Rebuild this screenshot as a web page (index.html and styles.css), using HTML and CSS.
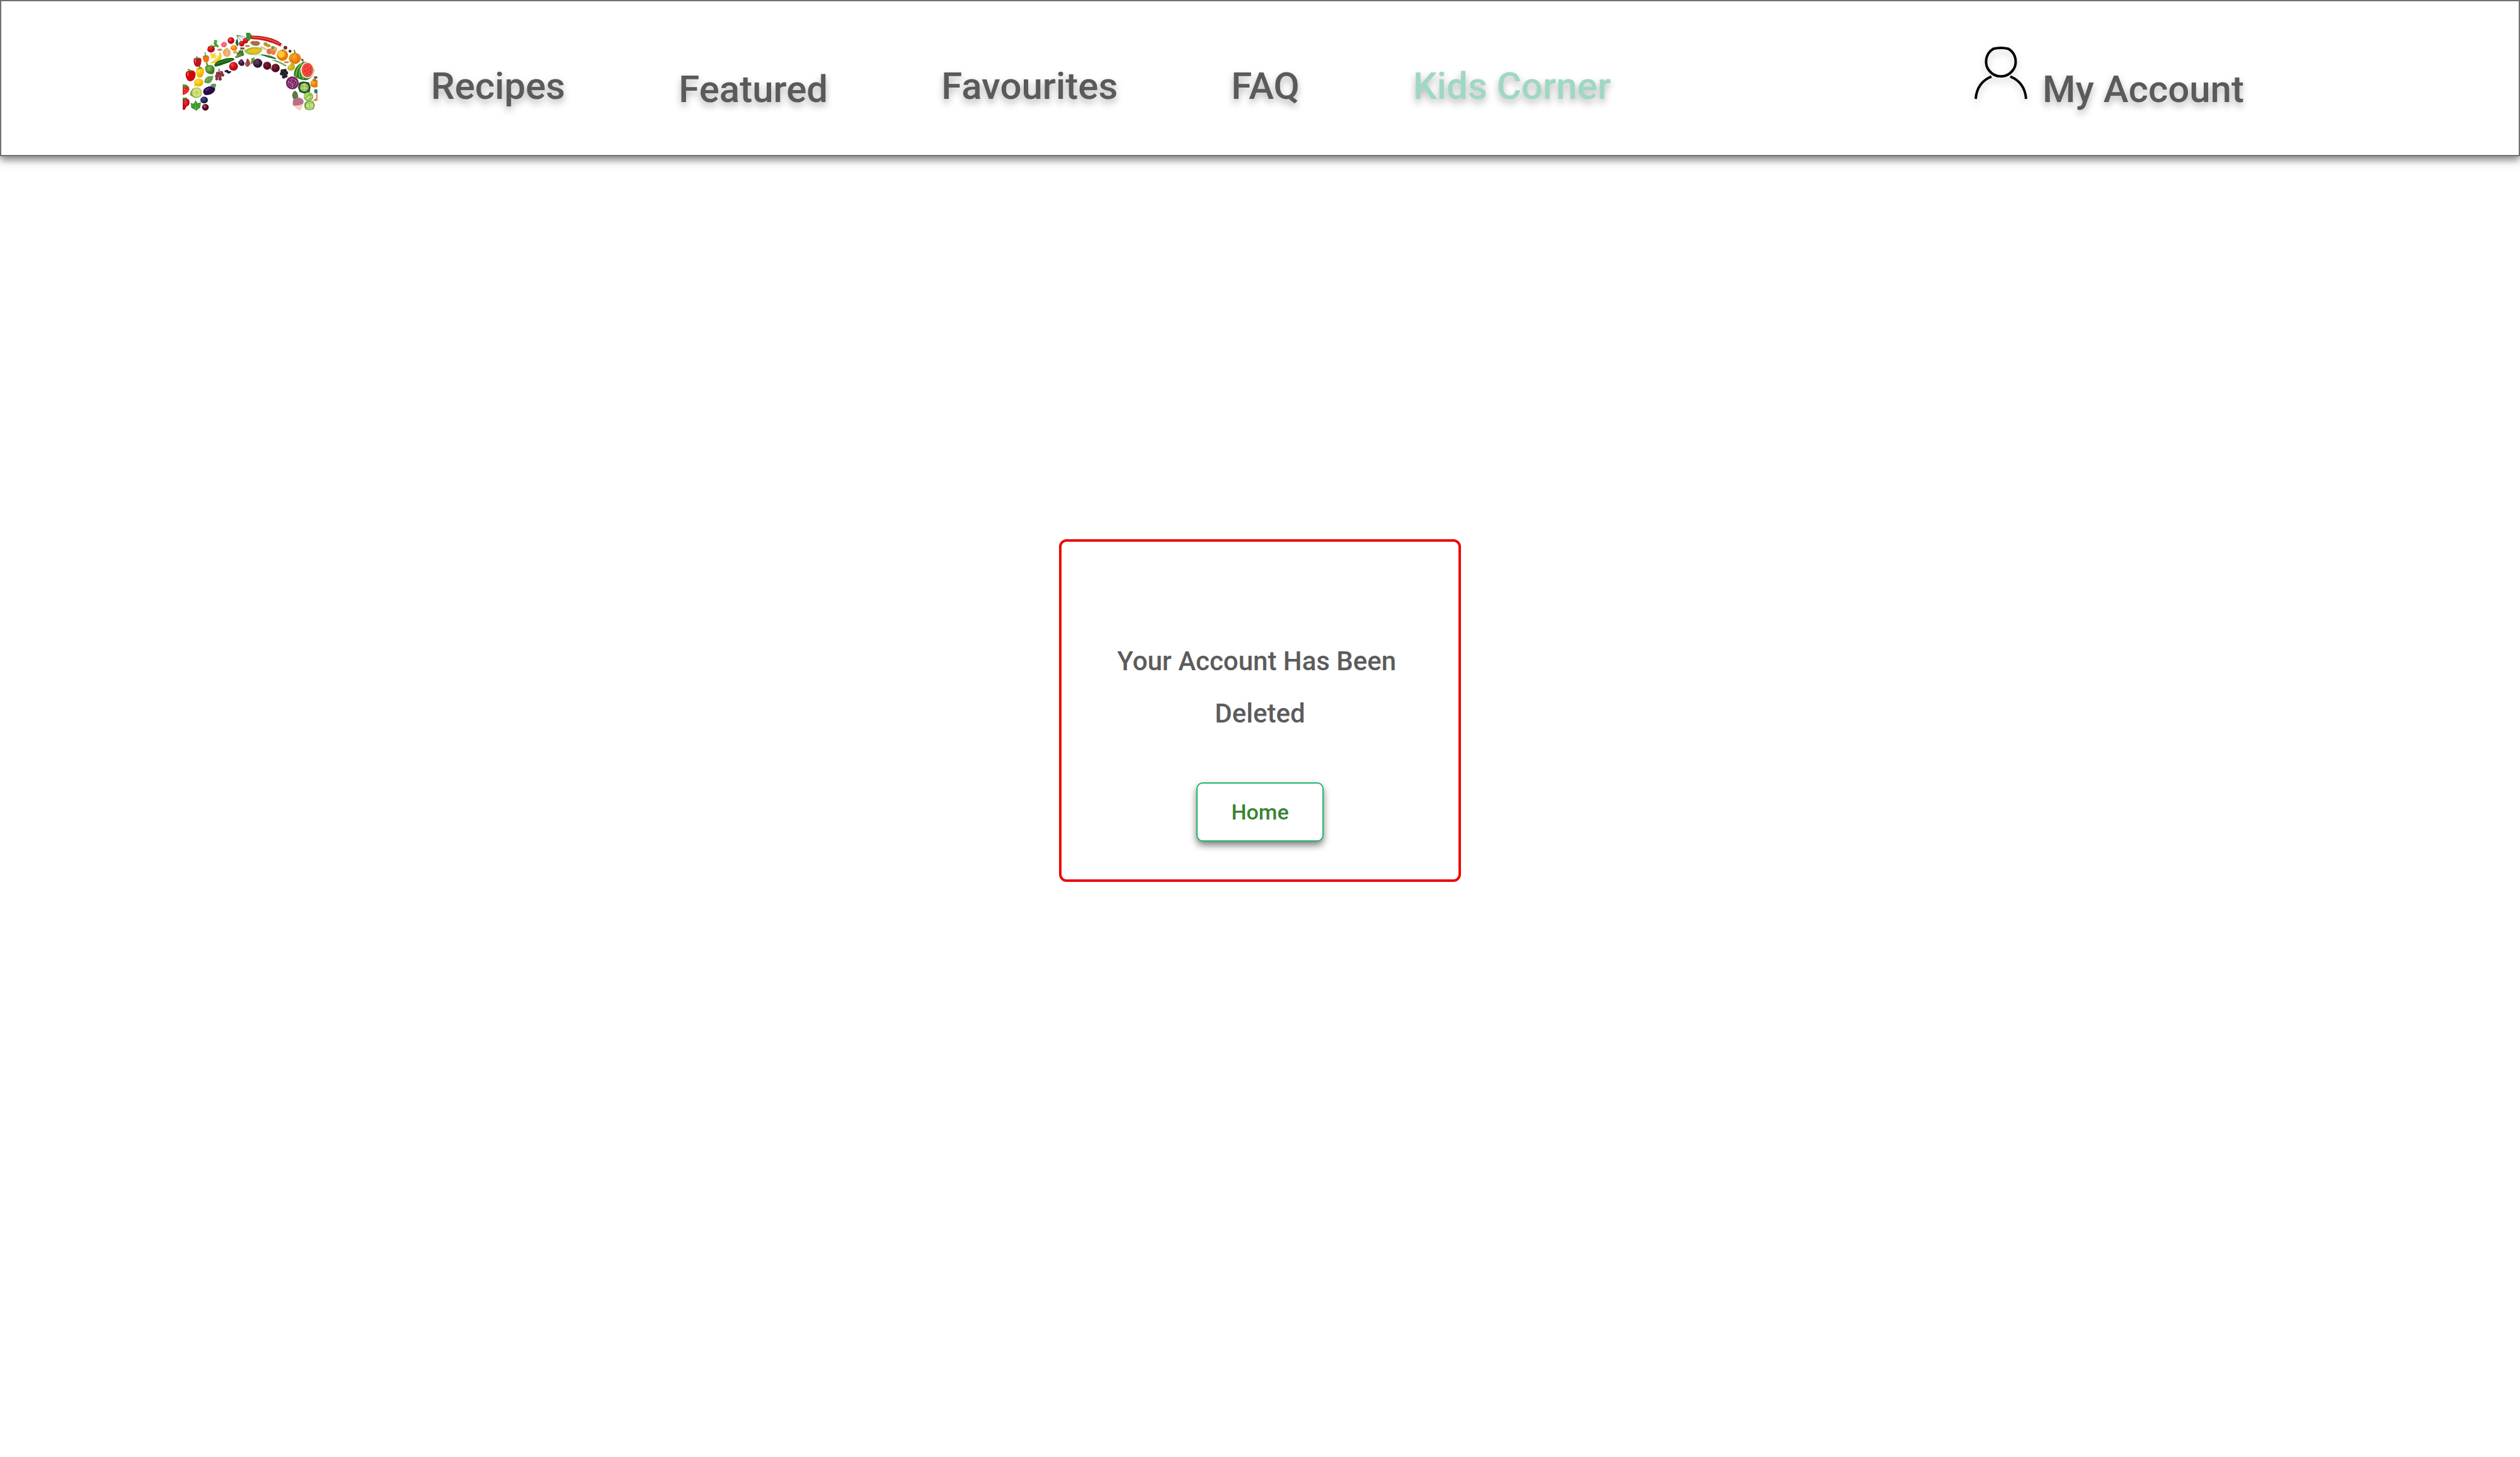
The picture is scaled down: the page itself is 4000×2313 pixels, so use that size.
FILE: index.html
```html
<!DOCTYPE html>
<html lang="en">
<head>
<meta charset="utf-8">
<meta name="viewport" content="width=device-width, initial-scale=1">
<title>Account deleted</title>
<link rel="stylesheet" href="styles.css">
</head>
<body>
<header class="site-header">
  <a class="logo" href="#" aria-label="Home page">
    <svg class="logo-art" viewBox="63 66 642 372" aria-hidden="true">
      <defs>
        <radialGradient id="red" cx=".4" cy=".35"><stop offset="0" stop-color="#f0303a"/><stop offset="1" stop-color="#b80510"/></radialGradient>
        <radialGradient id="orange" cx=".4" cy=".35"><stop offset="0" stop-color="#ffb52e"/><stop offset="1" stop-color="#e87a08"/></radialGradient>
        <radialGradient id="yellow" cx=".4" cy=".35"><stop offset="0" stop-color="#ffe94a"/><stop offset="1" stop-color="#f0b400"/></radialGradient>
        <radialGradient id="plum" cx=".4" cy=".35"><stop offset="0" stop-color="#6d4468"/><stop offset="1" stop-color="#2c1430"/></radialGradient>
        <radialGradient id="beet" cx=".4" cy=".35"><stop offset="0" stop-color="#8c1f36"/><stop offset="1" stop-color="#4c0a1c"/></radialGradient>
        <radialGradient id="leaf" cx=".4" cy=".35"><stop offset="0" stop-color="#8cc04a"/><stop offset="1" stop-color="#3d7d22"/></radialGradient>
        <radialGradient id="blue" cx=".4" cy=".35"><stop offset="0" stop-color="#4a5088"/><stop offset="1" stop-color="#1a1c48"/></radialGradient>
      </defs>
      <!-- left foot -->
      <path fill="#e3221c" d="M63 314q12-4 22 4 14 10 8 24-12 18-30 20z"/>
      <path fill="#3c9a2c" d="M63 312l18 2 12 10-14-2-4 8-12-10z"/>
      <path fill="#ffd0a0" d="M70 334h3v4h-3zM82 338h3v4h-3zM72 348h3v4h-3z"/>
      <path fill="url(#red)" d="M63 378q22-6 32 12 4 22-14 28l-8 15H63z"/>
      <path fill="#2f8a2a" d="M63 376l22 0-10 8 2 8-14-10z"/>
      <path fill="#8aa03a" d="M97 362q2-16 12-28 20-14 38-2 14 20 2 36-14 12-30 8z"/>
      <circle cx="130" cy="351" r="23" fill="#c4d860"/><circle cx="130" cy="351" r="18" fill="#dfe88a"/>
      <path stroke="#a5bb3c" stroke-width="2" d="M130 333v36M112 351h36M117 338l26 26M143 338l-26 26"/>
      <path fill="#38942e" d="M101 400l14 4 9-17 10 15 16-5-4 26-12 8-6 7-12-8-12-6z"/>
      <path stroke="#8bcc60" stroke-width="2" fill="none" d="M125 392v42M106 406l18 22M145 404l-19 26"/>
      <ellipse cx="165" cy="386" rx="18" ry="16" fill="url(#blue)"/>
      <circle cx="171" cy="421" r="16" fill="url(#beet)"/><circle cx="167" cy="417" r="5" fill="#b86070"/>
      <path fill="#2a0b45" d="M206 322q20 6 6 26-18 18-42 14-14-8-8-24 16-20 44-16z"/>
      <path fill="#5b2b86" d="M170 338q14-12 30-10-14 4-26 18z"/>
      <path fill="#5a9a52" d="M196 314l12-6 14 2-2 16-10 0-14-4z"/>
      <!-- left side -->
      <path fill="#d10808" d="M78 256q8-12 20-8 16-8 26 10 2 26-14 36-12 6-22 0-14-14-10-38z"/>
      <path fill="#ef5a50" d="M84 256q4-4 8-2l-4 24q-6-8-4-22z"/>
      <path stroke="#3b8a2b" stroke-width="6" fill="none" d="M88 240l8 4 8 4"/>
      <ellipse cx="139" cy="303" rx="22" ry="19" fill="url(#yellow)"/><path fill="#f0c420" d="M120 312l-4 8 10 0z"/>
      <path fill="url(#yellow)" d="M128 236q10-8 18-2 12-4 18 6 2 24-8 36-10 6-20 2-12-16-8-42z"/>
      <path stroke="#e0a000" stroke-width="2" d="M146 238v40"/>
      <path stroke="#3f9a30" stroke-width="5" fill="none" d="M146 234l-4-12M136 236l18-4"/>
      <path fill="#5c9a4a" d="M165 302q4-22 20-28 14-2 24-4-2 24-14 34-14 6-30-2z"/>
      <path stroke="#a9cf8c" stroke-width="2" fill="none" d="M168 302l38-30M182 290l-4-10M192 294l8-2"/>
      <path fill="url(#leaf)" d="M170 228q10-12 22-8 16-2 22 14 4 22-10 30-20 0-30-12-6-12-4-24z"/>
      <path stroke="#3d8a2c" stroke-width="6" fill="none" d="M176 208l6 16"/>
      <path fill="#c01320" d="M116 190q10-8 18-4 10-4 18 6 0 26-8 34-10 4-20 0-12-14-8-36z"/>
      <path fill="#ec6060" d="M121 192l6 0-2 20q-6-8-4-20z"/>
      <path stroke="#388a2a" stroke-width="4" fill="none" d="M122 188h22M134 186l-6-8"/>
      <path fill="#ef7410" d="M159 178q8-6 14-2 10-4 16 4 0 18-6 26-10 2-18-2-8-12-6-26z"/>
      <path stroke="#389a2c" stroke-width="4" fill="none" d="M164 176h18M173 174l-5-15"/>
      <path fill="url(#red)" d="M184 132q14-10 28-2 6 12 2 22-10 10-20 8-14-6-14-14z"/>
      <path fill="#4da832" d="M186 132l14-8 12 6-12 3zM210 102l14-2 4 8-4 8 12 14-4 6-14-4-8 2 4-12-6-6 6-6z"/>
      <path stroke="#9a2a30" stroke-width="5" fill="none" d="M236 238l0 12"/>
      <g fill="#85303a"><circle cx="230" cy="260" r="9"/><circle cx="246" cy="258" r="10"/><circle cx="254" cy="268" r="7"/><circle cx="225" cy="273" r="8"/><circle cx="239" cy="272" r="9"/><circle cx="225" cy="286" r="7"/><circle cx="241" cy="286" r="8"/></g>
      <g fill="#c27878"><circle cx="228" cy="258" r="2"/><circle cx="244" cy="256" r="3"/><circle cx="237" cy="270" r="3"/><circle cx="223" cy="272" r="2"/></g>
      <path fill="#281536" d="M262 246l14-4 8 8 10-2-2 8-12 6-8-8-8 0z"/>
      <!-- arch, left half -->
      <path fill="#f5d83c" d="M197 162l10 6 10-8 2 12 10 4-10 6 0 10-10-6-12 4 2-12-6-6z"/>
      <path fill="#f4c20e" d="M238 158l6 4q12 26-10 40-20 14-41 8 26-12 38-30 8-10 7-22z"/>
      <path fill="#ffe658" d="M240 164q6 20-12 32-10 8-24 11 22-11 32-27z"/>
      <path fill="#17621c" d="M214 218q6-14 30-22 30-12 54-10 14 2 10 10-24 14-50 20-24 10-38 11-8-2-6-9z"/>
      <path stroke="#4c9c36" stroke-width="3" fill="none" d="M224 214q36-18 74-20"/>
      <path fill="#f3b674" d="M253 156q8-12 20-18 16 8 20 20-2 20-18 24-20-4-22-26z"/>
      <path stroke="#d98c48" stroke-width="2" fill="none" d="M272 138q-14 22-4 42M274 138q16 20 4 42M264 144q-10 14-4 32"/>
      <ellipse cx="240" cy="147" rx="12" ry="5" fill="#b58a60"/>
      <path fill="#f27078" d="M244 122l8-10 8-4 12 6 2 12-10 10-14-2z"/>
      <circle cx="293" cy="103" r="16" fill="url(#red)"/><circle cx="289" cy="100" r="6" fill="#e05068"/>
      <ellipse cx="307" cy="138" rx="16" ry="13" fill="url(#orange)"/><ellipse cx="313" cy="158" rx="10" ry="8" fill="#edaa68"/>
      <path fill="#206a48" d="M316 104q4-10 8-6 8 16 2 32-14-6-10-26z"/>
      <path stroke="#235c38" stroke-width="2" fill="none" d="M318 78q24 4 42 28M322 78l22 32M322 78l2 22M322 78q34 2 44 18"/>
      <circle cx="344" cy="118" r="13" fill="url(#red)"/><circle cx="362" cy="104" r="13" fill="url(#red)"/>
      <g fill="#47782e"><circle cx="338" cy="158" r="9"/><circle cx="346" cy="168" r="9"/><circle cx="328" cy="166" r="7"/><circle cx="346" cy="155" r="6"/><path d="M310 182l20-16 14 12-24 8z"/></g>
      <path stroke="#98bb60" stroke-width="3" d="M314 182l20-10"/>
      <circle cx="305" cy="226" r="21" fill="url(#red)"/><path fill="#e45a66" d="M292 218q4-8 12-8-6 6-6 16z"/>
      <path fill="url(#plum)" d="M328 204l12-12 8 2 10 16-4 12-14 2-12-10z"/>
      <path fill="#a43f48" d="M368 190l6 0q12 16 10 26-6 12-14 12-10-4-10-14 8-12 8-24z"/><path fill="#de9188" d="M366 208l4 12-4-2z"/>
      <!-- crown -->
      <path fill="#3e8f32" d="M364 66h18l10 12-4 14-8 14-16-8 2-16z"/>
      <path fill="#c91c1a" d="M386 80q54-2 104 14 28 10 48 26l-8 12q-66-34-142-36z"/>
      <path stroke="#ef6a60" stroke-width="4" fill="none" d="M392 86q74 2 132 32"/>
      <path fill="#f7dede" d="M534 118l6 5-6 12-6-5z"/>
      <path fill="#90c040" d="M355 154q18-20 50-20 30 0 38 10-8 26-46 28-26 0-42-18z"/>
      <path fill="#f7c21a" d="M366 154q20-14 44-14 24 0 28 6-10 16-36 18-22 2-36-10z"/>
      <path stroke="#d89000" stroke-width="2" fill="none" stroke-dasharray="3 3" d="M374 154q28-12 60-8M382 160q26-4 50-8"/>
      <path fill="#a8703c" d="M384 112q8-10 22-6 16-4 26 8-4 16-18 14-22 2-30-16z"/>
      <ellipse cx="371" cy="129" rx="12" ry="5" fill="#c88640"/><path fill="#6f6038" d="M337 136h20v10h-20z"/>
      <path fill="#c29324" d="M448 114l12-4 10 10 10 2 2 10-10 4-14-6-10-6z"/>
      <path stroke="#d8b98a" stroke-width="7" stroke-linecap="round" d="M436 133l24 12"/>
      <circle cx="476" cy="155" r="14" fill="#ed6d48"/><circle cx="498" cy="146" r="15" fill="#f7a45e"/><circle cx="495" cy="161" r="10" fill="#f07c4a"/>
      <path fill="#58a83e" d="M484 132l12-4 4 10-14 12z"/>
      <path fill="#dfe6c0" d="M402 170q24-4 46 0l-2 6q-24-4-42 0z"/>
      <path fill="#2c7830" d="M436 168q46 4 74 20l-6 4q-34-6-68-20z"/>
      <path fill="#3a8a30" d="M486 194q34 2 72 28l-6 4q-34-20-66-32z"/>
      <path stroke="#b8d488" stroke-width="3" d="M516 204l34 18"/>
      <path fill="#689a38" d="M390 188l16-6-4 26-16 10z"/>
      <circle cx="420" cy="211" r="22" fill="url(#plum)"/>
      <circle cx="465" cy="223" r="19" fill="url(#beet)"/><circle cx="505" cy="234" r="20" fill="url(#beet)"/><circle cx="484" cy="237" r="5" fill="#b85870"/>
      <!-- arch, right half -->
      <circle cx="552" cy="137" r="9" fill="#6d3428"/><circle cx="574" cy="154" r="7" fill="#473018"/>
      <circle cx="538" cy="173" r="27" fill="url(#orange)"/><circle cx="532" cy="168" r="16" fill="#ffcb38"/><path stroke="#3b5a20" stroke-width="3" d="M540 145v8"/>
      <ellipse cx="597" cy="188" rx="29" ry="27" fill="url(#orange)"/>
      <path stroke="#d97008" stroke-width="3" fill="none" d="M596 162q-24 24-4 52M600 162q22 26 2 52"/><path stroke="#3a6a22" stroke-width="5" fill="none" d="M598 162l-4-14"/>
      <ellipse cx="557" cy="206" rx="12" ry="5" fill="#c99058"/><path fill="#8a4a28" d="M626 188l12 4 0 12-8-2z"/>
      <path fill="#c5b320" d="M580 204l8 2q0 8 8 12 6 14-4 24-16 10-30-2-2-14 10-20 8-6 8-16z"/>
      <path fill="#e4d34a" d="M570 226q6-6 12-6-8 8-8 18-6-4-4-12z"/>
      <g fill="#202026"><circle cx="538" cy="248" r="9"/><circle cx="550" cy="246" r="8"/><circle cx="556" cy="257" r="9"/><circle cx="534" cy="261" r="8"/><circle cx="545" cy="262" r="10"/><circle cx="554" cy="272" r="8"/><circle cx="544" cy="276" r="8"/></g>
      <g fill="#66666e"><circle cx="538" cy="246" r="2"/><circle cx="550" cy="256" r="2"/><circle cx="542" cy="266" r="2"/><circle cx="556" cy="267" r="2"/></g>
      <path fill="#2d7c24" d="M640 204q40 0 50 40-2 32-34 47-38 4-64-22 0-46 48-65z"/>
      <path stroke="#86bd4a" stroke-width="5" fill="none" d="M630 212q-26 24-28 60M626 232q-10 24-6 48M630 262q0 14 8 24"/>
      <ellipse cx="656" cy="244" rx="32" ry="39" fill="#e8f0cc"/><ellipse cx="657" cy="244" rx="27" ry="34" fill="#f5453e"/>
      <g fill="#7a1820"><path d="M644 228h3v5h-3zM656 222h3v5h-3zM668 232h3v5h-3zM644 246h3v5h-3zM658 240h3v5h-3zM670 250h3v5h-3zM654 258h3v5h-3z"/></g>
      <ellipse cx="585" cy="305" rx="30" ry="31" fill="#75245f"/>
      <path stroke="#d7a3cb" stroke-width="3" fill="none" stroke-dasharray="7 3" d="M585 285a20 20 0 1 0 20 20q0-18-20-20M585 295a10 10 0 1 0 10 10M585 305v24M566 300l14 4M602 292l-12 10"/>
      <path fill="#1f5423" d="M616 304l20-6 28 4 8 22-4 24-24 8-24-8-8-20z"/>
      <ellipse cx="642" cy="326" rx="21" ry="20" fill="#98ba5e"/><path stroke="#dcea9e" stroke-width="3" fill="none" d="M628 316q14-12 26 0M642 308v36M626 334q16-12 30 0"/>
      <ellipse cx="696" cy="279" rx="9" ry="6" fill="#8a522c"/>
      <path fill="url(#orange)" d="M672 300q14-16 33-8v32q-24 8-34-8z"/><path fill="#4f8a34" d="M680 288l16-2 4 6-14 4z"/>
      <!-- right foot -->
      <path fill="#34806a" d="M688 338l10-4 7 4v18l-14-2z"/><path fill="#e08a4a" d="M698 360l7-2v32l-20 2 2-8 12-6z"/>
      <path fill="#597c42" d="M590 346l10-4 8 8 4 12 2 22-12 4-14-8-4-18z"/>
      <path fill="#bc6e86" d="M588 388q12-14 32-12 16 2 19 18-4 24-20 30-24-2-32-16z"/>
      <path fill="#efd6c4" d="M592 412q20 4 44-8-4 18-10 30l-6 2q-20-6-28-24z"/>
      <circle cx="662" cy="371" r="23" fill="#8fc152"/><path stroke="#d3eca0" stroke-width="4" fill="none" d="M646 374q2-18 16-18M662 384v-18M650 384q12-14 28-12"/>
      <path fill="#79a83c" d="M644 398l16-8 24 2 9 18-6 20-20 6-20-6-6-16z"/>
      <circle cx="668" cy="413" r="18" fill="#c9df92"/><path stroke="#8dba55" stroke-width="3" fill="none" d="M656 406q12-10 22 0M656 420q12 10 24 0M668 402v22"/>
    </svg>
  </a>
  <nav class="main-nav" aria-label="Main">
    <a class="nav-link" href="#">Recipes</a>
    <a class="nav-link nav-link--low" href="#">Featured</a>
    <a class="nav-link" href="#">Favourites</a>
    <a class="nav-link" href="#">FAQ</a>
    <a class="nav-link nav-link--kids" href="#">Kids Corner</a>
  </nav>
  <a class="account nav-link nav-link--low" href="#">
    <svg class="account-icon" viewBox="0 0 84 83" aria-hidden="true">
      <path d="M30 2.500Q42 -.500 54 2.500A23.500 23.500 0 1 1 30 2.500Z"/>
      <path d="M2 82Q4 56 27 46.500M57 46.500Q80 56 82 82"/>
    </svg>
    <span>My Account</span>
  </a>
</header>
<main class="page">
  <section class="notice">
    <h1 class="notice-title">Your Account Has Been&nbsp;<br>Deleted</h1>
    <button class="home-button" type="button">Home</button>
  </section>
</main>
</body>
</html>
```

FILE: styles.css
```css
*,
*::before,
*::after {
  box-sizing: border-box;
}

body {
  margin: 0;
  background: #fff;
  color: #5c5c5c;
  font-family: Roboto, "Liberation Sans", sans-serif;
  font-weight: 500;
}

.site-header {
  display: flex;
  align-items: flex-start;
  min-height: 248px;
  padding: 50px 10.9% 0 7.2%;
  border: 2px solid #707070;
  background: #fff;
  box-shadow: 0 6px 12px rgba(0, 0, 0, 0.5);
}

.logo {
  flex: none;
  width: 214px;
}

.logo-art {
  display: block;
  width: 100%;
}

.main-nav {
  display: flex;
  align-items: flex-start;
  gap: 180px;
  margin-left: 180px;
  padding-top: 50px;
}

.nav-link {
  color: #5a5a5a;
  font-size: 60px;
  line-height: 70px;
  text-decoration: none;
  text-shadow: 0 6px 12px rgba(0, 0, 0, 0.3);
  white-space: nowrap;
}

.nav-link--low {
  padding-top: 5px;
}

.nav-link--kids {
  color: #9fd8c2;
}

.account {
  display: flex;
  align-items: flex-start;
  gap: 24px;
  margin-left: auto;
  padding-top: 23px;
}

.account span {
  padding-top: 32px;
}

.account-icon {
  width: 84px;
  height: 83px;
  overflow: visible;
  fill: none;
  stroke: #000;
  stroke-width: 4;
  filter: drop-shadow(0 6px 6px rgba(0, 0, 0, 0.2));
}

.page {
  display: flex;
  justify-content: center;
  padding: 608px 24px 100px;
}

.notice {
  display: flex;
  flex-direction: column;
  align-items: center;
  width: 638px;
  padding: 148px 24px 60px;
  border: 4px solid #ee0404;
  border-radius: 12px;
}

.notice-title {
  margin: 0;
  font-size: 42px;
  font-weight: 500;
  line-height: 83px;
  text-align: center;
}

.home-button {
  width: 202px;
  height: 94px;
  margin-top: 68px;
  padding: 0;
  border: 2px solid #20b86c;
  border-radius: 10px;
  background: #fff;
  box-shadow: 0 6px 12px rgba(0, 0, 0, 0.5);
  color: #388432;
  font: inherit;
  font-size: 34px;
}
```
